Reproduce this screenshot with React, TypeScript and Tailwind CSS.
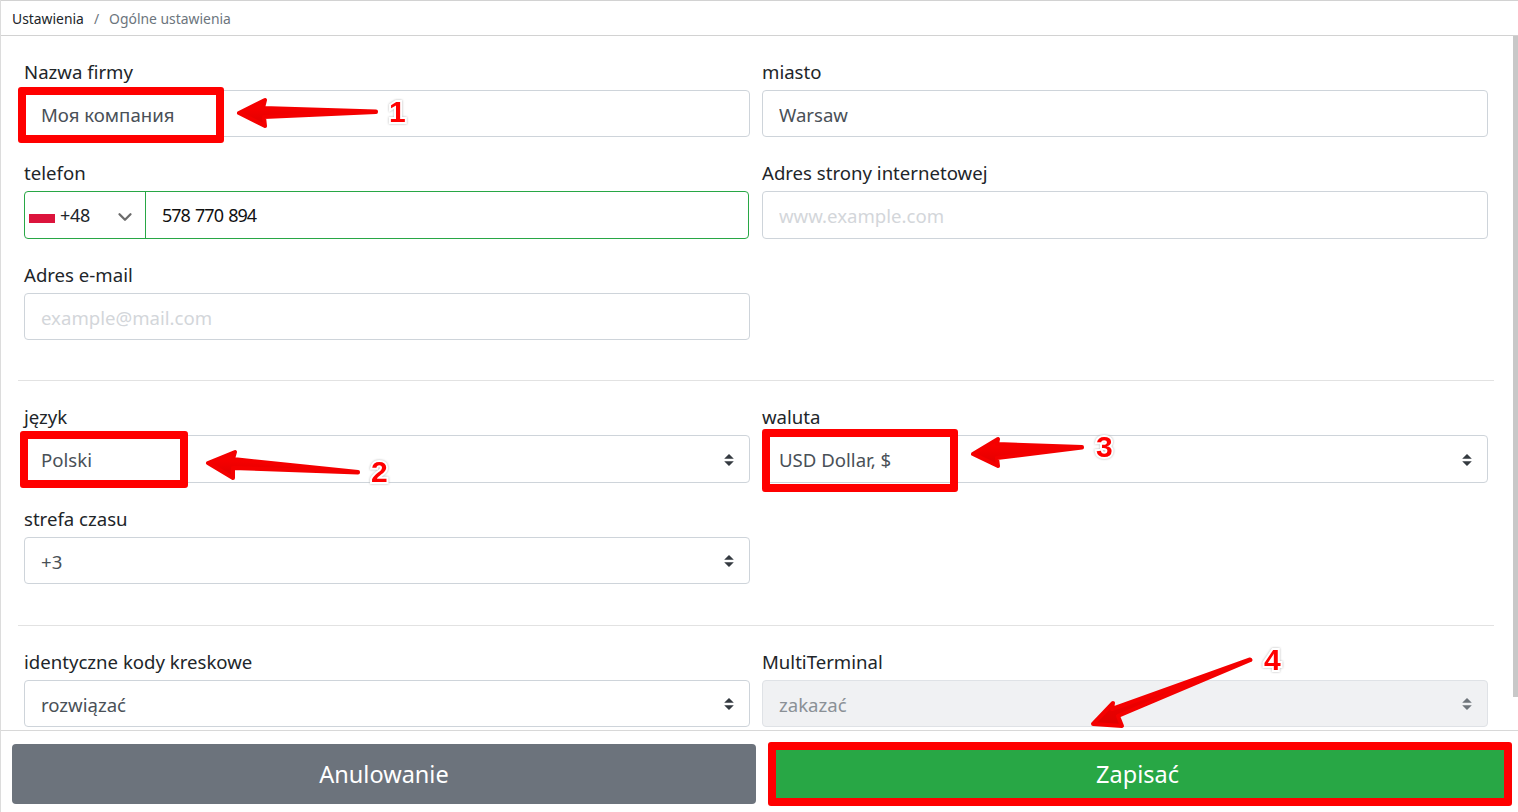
import { ChevronDown } from "lucide-react";

function SelectArrows({ muted, tall }: { muted?: boolean; tall?: boolean }) {
  return (
    <svg
      viewBox="0 0 4 5"
      className={`pointer-events-none absolute right-4 top-1/2 h-[12px] w-[10px] -translate-y-1/2 ${tall ? "mt-px" : ""} ${muted ? "text-[#6f757b]" : "text-[#343a40]"}`}
    >
      <path fill="currentColor" d="M2 0L0 2h4zm0 5L0 3h4z" />
    </svg>
  );
}

function Label({ children }: { children: string }) {
  return <label className="mb-[5px] block h-[27px] text-[18.6px] leading-[28px] text-[#212529]">{children}</label>;
}

function TextField({ label, value, placeholder, tall }: { label: string; value?: string; placeholder?: string; tall?: boolean }) {
  return (
    <div>
      <Label>{label}</Label>
      <input
        readOnly
        value={value ?? ""}
        placeholder={placeholder}
        className={`block w-full rounded border border-[#ced4da] bg-white px-4 text-[18.6px] text-[#495057] outline-none placeholder:text-[#d3d6da] ${tall ? "h-[48px]" : "h-[47px] pt-[2px]"}`}
      />
    </div>
  );
}

function SelectField({ label, value, tall, disabled }: { label: string; value: string; tall?: boolean; disabled?: boolean }) {
  return (
    <div>
      <Label>{label}</Label>
      <div className="relative">
        <select
          disabled={disabled}
          defaultValue={value}
          className={`block w-full appearance-none rounded border px-4 pt-[2px] text-[18.6px] outline-none ${tall ? "h-[48px]" : "h-[47px]"} ${
            disabled ? "border-[#dfe2e6] bg-[#f0f1f3] text-[#8a9096]" : "border-[#ced4da] bg-white text-[#495057]"
          }`}
        >
          <option>{value}</option>
        </select>
        <SelectArrows muted={disabled} tall={tall} />
      </div>
    </div>
  );
}

function PhoneField() {
  return (
    <div>
      <Label>telefon</Label>
      <div className="mr-px flex h-[48px] items-center rounded border border-[#28a745] bg-white text-[18px]">
        <div className="flex h-full w-[121px] shrink-0 items-center border-r border-[#28a745] pl-[4px] pr-[9px]">
          <div className="flex h-[16px] w-[26px] shrink-0 flex-col">
            <div className="h-[7px] bg-white" />
            <div className="h-[9px] bg-[#dc143c]" />
          </div>
          <span className="ml-[5px] tracking-[-0.3px] text-[#212529]">+48</span>
          <ChevronDown size={22} strokeWidth={2.5} className="ml-auto mt-[3px] text-[#6b6b6b]" />
        </div>
        <input readOnly value="578 770 894" className="h-full min-w-0 flex-1 bg-transparent px-4 tracking-[-1px] text-[#111] outline-none [word-spacing:1.5px]" />
      </div>
    </div>
  );
}

function RedBox({ className }: { className: string }) {
  return <div className={`pointer-events-none absolute rounded-[3px] border-[8px] border-[#ff0000] ${className}`} />;
}

function Num({ n, className }: { n: string; className: string }) {
  return (
    <span
      className={`pointer-events-none absolute font-['Liberation_Sans',sans-serif] text-[30px] leading-none font-bold text-[#ff0000] [paint-order:stroke_fill] [-webkit-text-stroke:4px_#ffffff] drop-shadow-[0_0_1px_#b5b5b5] ${className}`}
    >
      {n}
    </span>
  );
}

// the hand drawn arrows and screenshot annotations sit over the form
function Arrows() {
  return (
    <svg viewBox="0 0 1518 812" className="pointer-events-none absolute inset-0 h-[812px] w-[1518px]">
      <defs>
        <linearGradient id="arrowShade" x1="0" y1="0" x2="0" y2="1">
          <stop offset="0" stopColor="#ff0000" />
          <stop offset="1" stopColor="#e00000" />
        </linearGradient>
      </defs>
      <g fill="url(#arrowShade)" stroke="#f40000" strokeWidth="4" strokeLinejoin="round">
        <polygon points="239,113 265,100 263,108 376,111.5 376,112 264,117 265,126" />
        <polygon points="208,463 235,452 233,459 358,472 358,472.5 233,468 233,478" />
        <polygon points="973,454 998,439 997,444 1082,447 1082,447.5 997,458 998,466" />
        <polygon points="1093,724 1113,703 1112,709 1250,659.5 1250.5,660 1118,716 1122,726" />
      </g>
    </svg>
  );
}

export default function App() {
  return (
    <div className="relative flex h-[812px] w-[1518px] flex-col overflow-hidden border-l border-[#dcdcdc] bg-white font-['Noto_Sans',sans-serif]">
      {/* Breadcrumb */}
      <div className="flex h-[36px] shrink-0 items-center border-y border-[#d2d2d2] pl-[11px] pt-[2px] text-[13.9px]">
        <span className="text-[#212529]">Ustawienia</span>
        <span className="mx-[10px] text-[#6c757d]">/</span>
        <span className="text-[#6c757d]">Ogólne ustawienia</span>
      </div>

      {/* Form */}
      <div className="relative min-h-0 flex-1 overflow-hidden pt-[22px]">
        <div className="absolute right-0 top-0 h-[661px] w-[5px] bg-[#c8c8c8]" />
        <div className="pl-[17px] pr-[24px]">
          <div className="grid grid-cols-2 gap-x-[12px] gap-y-[22px] px-[6px]">
            <TextField label="Nazwa firmy" value="Моя компания" />
            <TextField label="miasto" value="Warsaw" />
            <PhoneField />
            <TextField label="Adres strony internetowej" placeholder="www.example.com" tall />
            <TextField label="Adres e-mail" placeholder="example@mail.com" />
          </div>
          <hr className="mb-[22px] mt-[40px] border-[#e2e2e2]" />
          <div className="grid grid-cols-2 gap-x-[12px] gap-y-[22px] px-[6px]">
            <SelectField label="język" value="Polski" tall />
            <SelectField label="waluta" value="USD Dollar, $" tall />
            <SelectField label="strefa czasu" value="+3" />
          </div>
          <hr className="mb-[22px] mt-[41px] border-[#e2e2e2]" />
          <div className="grid grid-cols-2 gap-x-[12px] gap-y-[22px] px-[6px]">
            <SelectField label="identyczne kody kreskowe" value="rozwiązać" />
            <SelectField label="MultiTerminal" value="zakazać" disabled />
          </div>
        </div>
      </div>

      {/* Footer */}
      <div className="grid h-[82px] shrink-0 grid-cols-2 gap-x-[12px] border-t border-[#d8d8d8] bg-white pb-[8px] pl-[11px] pr-[6px] pt-[13px]">
        <button className="rounded bg-[#6c737c] pt-[2px] text-[23.5px] text-white">Anulowanie</button>
        <button className="rounded bg-[#28a745] pr-[5px] pt-[2px] text-[23.5px] text-white">Zapisać</button>
      </div>

      {/* Annotations, offset by the 1px left border */}
      <div className="pointer-events-none absolute -left-px top-0 h-[812px] w-[1518px]">
        <RedBox className="left-[18px] top-[87px] h-[56px] w-[206px]" />
        <RedBox className="left-[20px] top-[431px] h-[57px] w-[168px]" />
        <RedBox className="left-[762px] top-[429px] h-[63px] w-[196px]" />
        <RedBox className="left-[768px] top-[742px] h-[64px] w-[744px]" />
        <Arrows />
        <Num n="1" className="left-[389px] top-[97px]" />
        <Num n="2" className="left-[371px] top-[457px]" />
        <Num n="3" className="left-[1096px] top-[432px]" />
        <Num n="4" className="left-[1264px] top-[645px]" />
      </div>
    </div>
  );
}
